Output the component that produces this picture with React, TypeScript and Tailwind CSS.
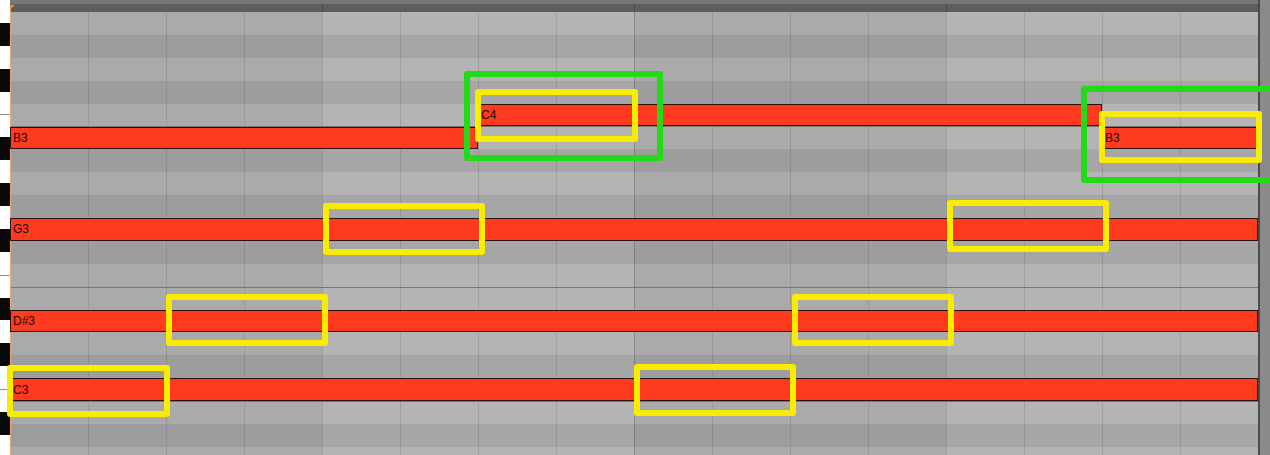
import React from "react";

const ROW_H = "h-[22.9px]";
const BEAT = 78;

// Pitches from the top of the visible range downwards
const ROWS = [
  "E4", "D#4", "D4", "C#4", "C4", "B3", "A#3", "A3", "G#3", "G3",
  "F#3", "F3", "E3", "D#3", "D3", "C#3", "C3", "B2", "A#2", "A2",
];

type Note = { pitch: string; start: number; len: number };

const NOTES: Note[] = [
  { pitch: "B3", start: 0, len: 6 },
  { pitch: "C4", start: 6, len: 8 },
  { pitch: "B3", start: 14, len: 2 },
  { pitch: "G3", start: 0, len: 16 },
  { pitch: "D#3", start: 0, len: 16 },
  { pitch: "C3", start: 0, len: 16 },
];

type Box = { x: number; y: number; w: number; h: number };

const YELLOW: Box[] = [
  { x: 475, y: 89, w: 163, h: 53 },
  { x: 1099, y: 111, w: 163, h: 52 },
  { x: 323, y: 203, w: 162, h: 52 },
  { x: 947, y: 200, w: 162, h: 52 },
  { x: 166, y: 294, w: 162, h: 52 },
  { x: 792, y: 294, w: 162, h: 52 },
  { x: 7, y: 365, w: 163, h: 52 },
  { x: 634, y: 364, w: 162, h: 52 },
];

const GREEN: Box[] = [
  { x: 464, y: 71, w: 199, h: 90 },
  { x: 1081, y: 86, w: 200, h: 97 },
];

const isBlack = (p: string) => p.includes("#");
const hasKeySeam = (p: string, i: number) =>
  i > 0 && (p.startsWith("E") || p.startsWith("B"));

function cellClass(beat: number, black: boolean) {
  const darkBar = Math.floor(beat / 4) % 2 === 0;
  let bg: string;
  if (darkBar) bg = black ? "bg-[#9d9d9d]" : "bg-[#aaaaaa]";
  else bg = black ? "bg-[#a6a6a6]" : "bg-[#b4b4b4]";
  let line = "border-l border-black/10";
  if (beat === 0) line = "";
  else if (beat === 8) line = "border-l border-black/20";
  return `w-[78px] shrink-0 h-full ${bg} ${line}`;
}

function KnobIcon() {
  return (
    <svg width="10" height="12" viewBox="0 0 10 12" className="block">
      <circle cx="3" cy="1.5" r="5" fill="none" stroke="#3c3c3c" strokeWidth="1.2" />
      <circle cx="3" cy="1.5" r="2.4" fill="none" stroke="#4a4a4a" strokeWidth="1" />
    </svg>
  );
}

function Keyboard() {
  return (
    <div className="w-[10px] shrink-0 flex flex-col">
      <div className="h-[12px] bg-[#777777] overflow-hidden">
        <KnobIcon />
      </div>
      {ROWS.map((p, i) => (
        <div
          key={p}
          className={`${ROW_H} shrink-0 ${isBlack(p) ? "bg-[#0a0a0a]" : "bg-white"} ${
            hasKeySeam(p, i) ? "border-t border-[#8c8c8c]" : ""
          }`}
        />
      ))}
    </div>
  );
}

function TopBar() {
  return (
    <div className="h-[12px] flex flex-col">
      <div className="h-[4px] bg-[#767676]" />
      <div className="h-[8px] flex bg-[#5d5d5d]">
        {[0, 1, 2, 3].map((b) => (
          <div key={b} className={`w-[312px] h-full ${b === 0 ? "" : "border-l border-black/20"}`} />
        ))}
      </div>
    </div>
  );
}

function NoteBar({ note }: { note: Note }) {
  return (
    <div
      className="absolute top-0 bottom-0 z-20 flex items-center bg-[#ff3a1f] border border-[#2c120c] pl-[2px] text-[12px] leading-none text-[#260803]"
      style={{ left: note.start * BEAT, width: note.len * BEAT }}
    >
      {note.pitch}
    </div>
  );
}

function Lane({ pitch, index }: { pitch: string; index: number }) {
  const black = isBlack(pitch);
  const notes = NOTES.filter((n) => n.pitch === pitch);
  return (
    <div className={`relative ${ROW_H} shrink-0 flex ${hasKeySeam(pitch, index) ? "border-t border-black/15" : ""}`}>
      {Array.from({ length: 16 }, (_, k) => (
        <div key={k} className={cellClass(k, black)} />
      ))}
      {notes.map((n) => (
        <NoteBar key={`${n.pitch}-${n.start}`} note={n} />
      ))}
    </div>
  );
}

function Frame({ box, color }: { box: Box; color: "yellow" | "green" }) {
  return (
    <div
      className={`absolute z-30 rounded-[3px] border-[6px] ${
        color === "yellow" ? "border-[#f8ec00]" : "border-[#22d91a]"
      }`}
      style={{ left: box.x, top: box.y, width: box.w, height: box.h }}
    />
  );
}

export default function App() {
  return (
    <div className="relative w-[1270px] h-[455px] overflow-hidden bg-[#8c8c8c] font-['Liberation_Sans',Arial,sans-serif]">
      <div className="flex h-full">
        <Keyboard />
        <div className="relative w-[1248px] shrink-0 flex flex-col">
          <TopBar />
          {ROWS.map((p, i) => (
            <Lane key={p} pitch={p} index={i} />
          ))}
          {/* clip start line and marker */}
          <div className="absolute left-0 top-[9px] bottom-0 w-px bg-[#e9a878] z-10" />
          <div className="absolute left-0 top-[5px] z-10 w-0 h-0 border-t-[5px] border-t-[#f08a22] border-r-[5px] border-r-transparent" />
        </div>
        <div className="flex flex-1">
          <div className="w-[2px] bg-[#4b4b4b]" />
          <div className="flex-1 bg-[#8a8a8a]" />
        </div>
      </div>
      {YELLOW.map((b, i) => (
        <Frame key={`y${i}`} box={b} color="yellow" />
      ))}
      {GREEN.map((b, i) => (
        <Frame key={`g${i}`} box={b} color="green" />
      ))}
    </div>
  );
}
